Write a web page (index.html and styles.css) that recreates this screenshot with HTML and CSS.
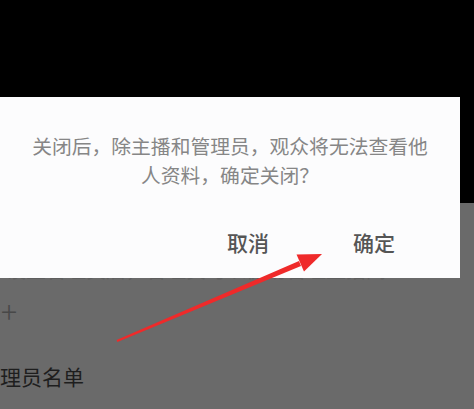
FILE: index.html
```html
<!DOCTYPE html>
<html lang="zh">
<head>
<meta charset="utf-8">
<link rel="stylesheet" href="styles.css">
</head>
<body>
<div class="screen">
  <div class="video"></div>
  <div class="page">
    <div class="row-text">设置管理员后，管理员可以协助管理直播间</div>
    <div class="plus">+</div>
    <div class="list-title">理员名单</div>
  </div>

  <div class="dialog">
    <p class="message">关闭后，除主播和管理员，观众将无法查看他<br>人资料，确定关闭？</p>
    <div class="actions">
      <span class="btn">取消</span>
      <span class="btn">确定</span>
    </div>
  </div>

  <svg class="arrow" width="474" height="409" viewBox="0 0 474 409">
    <polygon points="116.6,340.1 117.4,341.9 301,265.9 299,260.9" fill="#ef2a2a"/>
    <polygon points="322,254 296.5,254.5 304,271.5" fill="#ef2a2a"/>
  </svg>
</div>
</body>
</html>
```

FILE: styles.css
```css
html, body {
  margin: 0;
  padding: 0;
}
body {
  background: #6a6a6a;
  font-family: "Noto Sans CJK SC", "Noto Sans", sans-serif;
}
.screen {
  position: relative;
  width: 474px;
  height: 409px;
  overflow: hidden;
  background: #6a6a6a;
}
.video {
  height: 203px;
  background: #000;
}
.page {
  display: flex;
  flex-direction: column;
}
.row-text {
  margin-top: 55px;
  padding-left: 6px;
  font-size: 20px;
  line-height: 24px;
  color: #5e5e5e;
  white-space: nowrap;
}
.plus {
  margin-top: 13px;
  padding-left: 1px;
  font-size: 30px;
  line-height: 31px;
  font-weight: 300;
  color: #484848;
}
.list-title {
  margin-top: 35px;
  font-size: 21px;
  line-height: 30px;
  font-weight: 400;
  color: #1e1e1e;
  white-space: nowrap;
}
.dialog {
  position: absolute;
  left: 0;
  top: 97px;
  width: 460px;
  height: 181px;
  background: #fcfcfd;
  display: flex;
  flex-direction: column;
}
.message {
  margin: 34px 0 0;
  text-align: center;
  font-size: 19.8px;
  line-height: 29px;
  color: #868686;
}
.actions {
  margin-top: 38px;
  display: flex;
  justify-content: flex-end;
  gap: 84px;
  padding-right: 65px;
}
.btn {
  font-size: 21px;
  line-height: 30px;
  color: #555;
  font-weight: 500;
}
.arrow {
  position: absolute;
  left: 0;
  top: 0;
}
```
